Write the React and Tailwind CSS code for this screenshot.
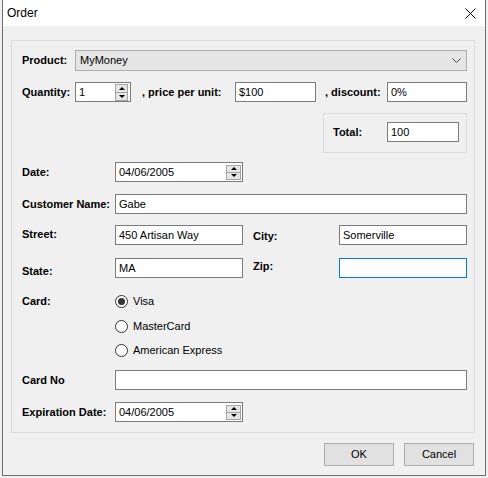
import React from 'react';

const font = "font-['Liberation_Sans',Arial,sans-serif]";

function Label({ children, className = '' }) {
  return (
    <span className={`text-[11px] leading-[13px] font-bold text-black whitespace-nowrap ${className}`}>
      {children}
    </span>
  );
}

function TextBox({ value = '', className = '', focus = false }) {
  return (
    <div
      className={`h-[20px] bg-white border flex items-center px-[3px] text-[11px] text-black ${
        focus ? 'border-[#0078d7]' : 'border-[#7a7a7a]'
      } ${className}`}
    >
      {value}
    </div>
  );
}

function Spin({ w = 'w-[13px]', h = 'h-[17px]' }) {
  return (
    <div className={`${w} ${h} flex flex-col border border-[#a3a3a3] bg-[#e6e6e6]`}>
      <div className="flex-1 flex items-center justify-center border-b border-[#a3a3a3]">
        <div className="w-0 h-0 border-l-[3px] border-r-[3px] border-b-[3px] border-l-transparent border-r-transparent border-b-black" />
      </div>
      <div className="flex-1 flex items-center justify-center">
        <div className="w-0 h-0 border-l-[3px] border-r-[3px] border-t-[3px] border-l-transparent border-r-transparent border-t-black" />
      </div>
    </div>
  );
}

function DatePicker({ value }) {
  return (
    <div className="w-[128px] h-[20px] bg-white border border-[#7a7a7a] flex items-center pl-[3px] pr-[1px] text-[11px] text-black">
      <span className="flex-1">{value}</span>
      <Spin w="w-[15px]" h="h-[15px]" />
    </div>
  );
}

function Radio({ checked, label }) {
  return (
    <div className="flex items-center h-[20px]">
      <div className="w-[13px] h-[13px] rounded-full border border-[#333333] bg-white flex items-center justify-center">
        {checked && <div className="w-[7px] h-[7px] rounded-full bg-[#333333]" />}
      </div>
      <span className="ml-[5px] text-[11px] text-black">{label}</span>
    </div>
  );
}

export default function App() {
  return (
    <div className={`w-[488px] h-[478px] bg-[#f0f0f0] ${font} overflow-hidden`}>
      <div className="ml-[2px] w-[484px] h-[476px] border-l border-r border-b border-[#6e6e6e] bg-[#f0f0f0] flex flex-col">
        {/* title bar */}
        <div className="h-[26px] bg-white flex items-center justify-between pl-[4px] pr-[9px]">
          <span className="text-[12px] text-black">Order</span>
          <svg width="11" height="11" viewBox="0 0 11 11">
            <path d="M0.5 0.5 L10.5 10.5 M10.5 0.5 L0.5 10.5" stroke="#000" strokeWidth="1" fill="none" />
          </svg>
        </div>

        {/* group box */}
        <div className="mt-[14px] ml-[8px] w-[464px] h-[393px] border border-[#dcdcdc] pl-[10px] pr-[7px] pt-[9px] flex flex-col">
          {/* product */}
          <div className="flex items-center h-[21px]">
            <Label className="w-[53px]">Product:</Label>
            <div className="w-[392px] h-[21px] bg-[#e5e5e5] border border-[#adadad] flex items-center pl-[4px] pr-[5px] text-[11px] text-black">
              <span className="flex-1">MyMoney</span>
              <svg width="9" height="5" viewBox="0 0 9 5">
                <polyline points="0.5,0.5 4.5,4.5 8.5,0.5" stroke="#444" strokeWidth="1" fill="none" />
              </svg>
            </div>
          </div>

          {/* quantity */}
          <div className="flex items-center h-[20px] mt-[11px]">
            <Label className="w-[53px]">Quantity:</Label>
            <div className="w-[56px] h-[20px] bg-white border border-[#7a7a7a] flex items-center pl-[3px] pr-[2px] text-[11px] text-black">
              <span className="flex-1">1</span>
              <Spin />
            </div>
            <Label className="ml-[11px] w-[93px]">, price per unit:</Label>
            <TextBox value="$100" className="w-[81px]" />
            <Label className="ml-[9px] w-[62px]">, discount:</Label>
            <TextBox value="0%" className="w-[80px]" />
          </div>

          {/* total */}
          <div className="flex justify-end mt-[11px]">
            <div className="w-[144px] h-[40px] border border-[#dcdcdc] flex items-start pl-[9px] pt-[8px]">
              <Label className="w-[54px] pt-[4px]">Total:</Label>
              <TextBox value="100" className="w-[72px]" />
            </div>
          </div>

          {/* date */}
          <div className="flex items-center h-[20px] mt-[9px]">
            <Label className="w-[93px]">Date:</Label>
            <DatePicker value="04/06/2005" />
          </div>

          {/* customer */}
          <div className="flex items-center h-[20px] mt-[12px]">
            <Label className="w-[93px]">Customer Name:</Label>
            <TextBox value="Gabe" className="w-[352px]" />
          </div>

          {/* street / city */}
          <div className="flex items-start h-[20px] mt-[11px]">
            <Label className="w-[93px] pt-[3px]">Street:</Label>
            <TextBox value="450 Artisan Way" className="w-[128px]" />
            <Label className="ml-[10px] w-[86px] pt-[5px]">City:</Label>
            <TextBox value="Somerville" className="w-[128px]" />
          </div>

          {/* state / zip */}
          <div className="flex items-start h-[20px] mt-[13px]">
            <Label className="w-[93px] pt-[7px]">State:</Label>
            <TextBox value="MA" className="w-[128px]" />
            <Label className="ml-[10px] w-[86px] pt-[2px]">Zip:</Label>
            <TextBox value="" focus className="w-[128px]" />
          </div>

          {/* card */}
          <div className="flex items-center h-[20px] mt-[13px]">
            <Label className="w-[93px]">Card:</Label>
            <Radio checked label="Visa" />
          </div>
          <div className="flex items-center h-[20px] mt-[5px] pl-[93px]">
            <Radio label="MasterCard" />
          </div>
          <div className="flex items-center h-[20px] mt-[4px] pl-[93px]">
            <Radio label="American Express" />
          </div>

          {/* card no */}
          <div className="flex items-center h-[20px] mt-[10px]">
            <Label className="w-[93px]">Card No</Label>
            <TextBox value="" className="w-[352px]" />
          </div>

          {/* expiration */}
          <div className="flex items-center h-[20px] mt-[12px]">
            <Label className="w-[93px]">Expiration Date:</Label>
            <DatePicker value="04/06/2005" />
          </div>
        </div>

        {/* buttons */}
        <div className="flex justify-end gap-[10px] mt-[10px] mr-[11px]">
          <button className="w-[70px] h-[23px] bg-[#e1e1e1] border border-[#adadad] text-[11px] text-black">OK</button>
          <button className="w-[70px] h-[23px] bg-[#e1e1e1] border border-[#adadad] text-[11px] text-black">Cancel</button>
        </div>
      </div>
    </div>
  );
}
